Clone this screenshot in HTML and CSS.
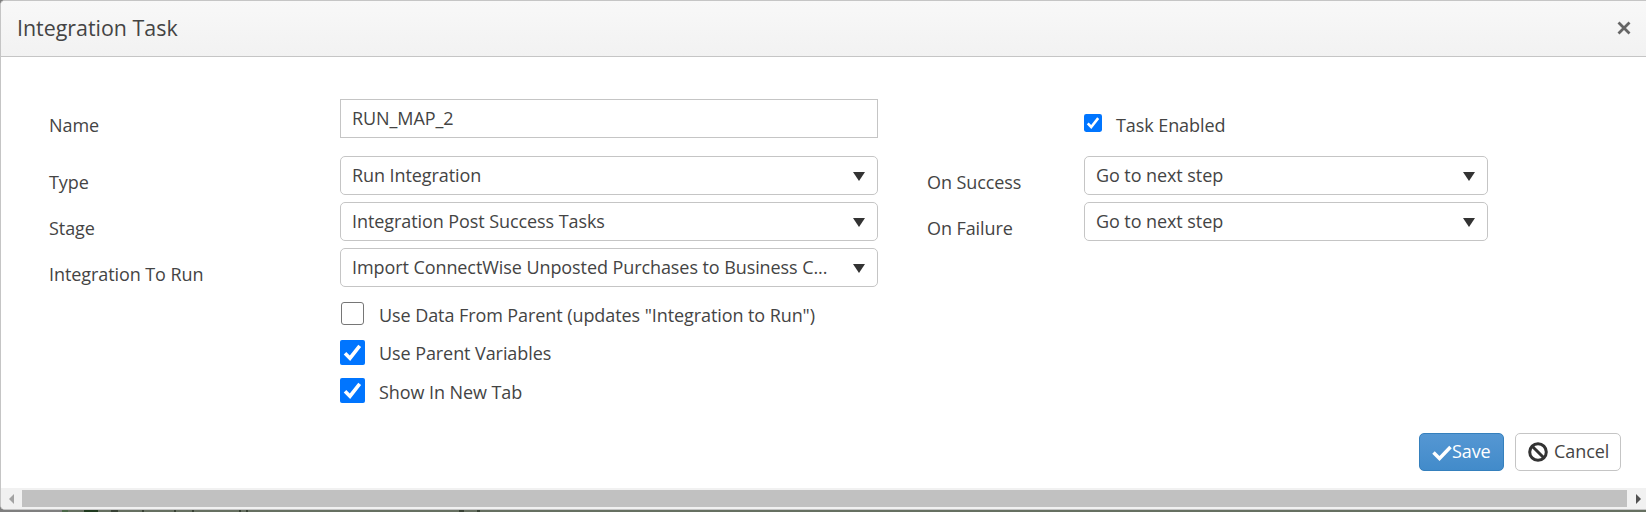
FILE: index.html
```
<!DOCTYPE html>
<html lang="en">
<head>
<meta charset="utf-8">
<title>Integration Task</title>
<link rel="stylesheet" href="styles.css">
</head>
<body>
<div class="dialog">
  <header class="titlebar">
    <h1 class="title">Integration Task</h1>
    <svg class="close" width="14" height="14" viewBox="0 0 14 14"><path d="M1.5 1.5l11 11M12.5 1.5l-11 11"/></svg>
  </header>
  <main class="body">
    <div class="form">
      <div class="row row-first">
        <label class="label">Name</label>
        <div class="field input"><span class="text">RUN_MAP_2</span></div>
        <span class="label-right"></span>
        <div class="enabled"><svg class="check small" viewBox="0 0 25 25"><rect width="25" height="25" rx="3"/><path d="M5.2 13l4.8 5L19.7 5.8"/></svg><span class="text">Task Enabled</span></div>
      </div>
      <div class="row">
        <label class="label">Type</label>
        <div class="field select"><span class="text">Run Integration</span><i class="arrow"></i></div>
        <label class="label-right">On Success</label>
        <div class="field select narrow"><span class="text">Go to next step</span><i class="arrow"></i></div>
      </div>
      <div class="row">
        <label class="label">Stage</label>
        <div class="field select"><span class="text">Integration Post Success Tasks</span><i class="arrow"></i></div>
        <label class="label-right">On Failure</label>
        <div class="field select narrow"><span class="text">Go to next step</span><i class="arrow"></i></div>
      </div>
      <div class="row">
        <label class="label">Integration To Run</label>
        <div class="field select"><span class="text">Import ConnectWise Unposted Purchases to Business C...</span><i class="arrow"></i></div>
      </div>
    </div>
    <div class="options">
      <div class="option"><span class="box"></span><span class="text">Use Data From Parent (updates "Integration to Run")</span></div>
      <div class="option"><svg class="check" viewBox="0 0 25 25"><rect width="25" height="25" rx="2"/><path d="M5 13.2l5 5L19.7 5.8"/></svg><span class="text">Use Parent Variables</span></div>
      <div class="option last"><svg class="check" viewBox="0 0 25 25"><rect width="25" height="25" rx="2"/><path d="M5 13.2l5 5L19.7 5.8"/></svg><span class="text">Show In New Tab</span></div>
    </div>
    <div class="actions">
      <div class="button save"><svg width="20" height="16" viewBox="0 0 20 16"><path d="M1.5 7.5l6 6L18.5 2"/></svg><span>Save</span></div>
      <div class="button cancel"><svg width="20" height="20" viewBox="0 0 20 20"><circle cx="10" cy="10" r="8.3"/><path d="M4.2 4.2l11.6 11.6"/></svg><span>Cancel</span></div>
    </div>
  </main>
  <div class="scrollbar">
    <i class="scroll-left"></i><div class="thumb"></div><i class="scroll-right"></i>
  </div>
</div>
<div class="backdrop"></div>
</body>
</html>
```
FILE: styles.css
```
* { box-sizing: border-box; }
body { margin: 0; width: 1646px; height: 512px; overflow: hidden; background: #7f7f7f; font-family: "Open Sans", sans-serif; font-size: 18px; font-weight: 400; letter-spacing: -0.08px; line-height: 24px; color: #444; }
.dialog { display: flex; flex-direction: column; height: 510px; border: 1px solid #c5c5c5; border-right: 0; border-radius: 5px 0 0 5px; background: #fff; overflow: hidden; }
.titlebar { display: flex; flex: none; align-items: center; justify-content: space-between; height: 56px; padding: 0 15px 1px 16px; border-bottom: 1px solid #c5c5c5; background: linear-gradient(#f8f8f8, #f2f2f2); }
.title { margin: 0; font-size: 21.4px; font-weight: 400; letter-spacing: 0; line-height: 28px; }
.close { fill: none; stroke: #666; stroke-width: 2.8; }
.body { flex: 1; display: flex; flex-direction: column; padding: 42px 25px 0 48px; }
.row { display: flex; height: 39px; margin-bottom: 7px; }
.row-first { margin-bottom: 18px; }
.label { width: 291px; padding-top: 14px; }
.label-right { width: 157px; padding-top: 14px; }
.text { white-space: nowrap; }
.field { display: flex; align-items: center; justify-content: space-between; width: 538px; height: 39px; margin-right: 49px; padding: 0 12px 2px 11px; border: 1px solid #c5c5c5; background: #fff; }
.select { border-radius: 5px; }
.narrow { width: 404px; margin: 0; }
.arrow { margin-top: 3px; border: 6px solid transparent; border-top: 9px solid #333; border-bottom: 0; }
.enabled { display: flex; padding-top: 15px; gap: 14px; }
.enabled .text { margin-top: -1px; }
.check { flex: none; width: 25px; height: 25px; }
.check rect { fill: #0075ff; }
.check path { fill: none; stroke: #fff; stroke-width: 3.6; }
.small { width: 18px; height: 18px; }
.options { padding: 8px 0 0 291px; }
.option { display: flex; align-items: flex-start; height: 38px; gap: 14px; }
.option .text { padding-top: 1px; }
.option.last .text { padding-top: 2px; }
.box { width: 23px; height: 23px; margin: 0 1px; border: 1px solid #767676; border-radius: 3px; }
.actions { display: flex; justify-content: flex-end; gap: 11px; margin-top: 17px; }
.button { display: flex; align-items: center; height: 38px; padding: 0 12px 2px; border: 1px solid #c5c5c5; border-radius: 5px; }
.button svg { flex: none; fill: none; }
.save { width: 85px; color: #fff; background: linear-gradient(#5597d3, #428bca); border-color: #3580bd; }
.save svg { stroke: #fff; stroke-width: 3.5; margin-top: 3px; }
.cancel { width: 106px; gap: 6px; }
.cancel svg { stroke: #333; stroke-width: 3; margin-top: 2px; }
.scrollbar { display: flex; flex: none; align-items: center; height: 21px; padding: 0 5px 0 8px; background: #f1f1f1; }
.thumb { flex: 1; height: 17px; margin: 0 9px 0 8px; background: #c1c1c1; }
.scroll-left { border: 5px solid transparent; border-left: 0; border-right-color: #a3a3a3; }
.scroll-right { border: 5px solid transparent; border-right: 0; border-left-color: #505050; }
.backdrop { height: 2px; background: linear-gradient(90deg, #7f7f7f 62px, #4b6848 62px 68px, #667061 68px 84px, #1f3a1f 84px 98px, #667061 98px 111px, #384235 111px 118px, #667061 118px 142px, #384235 142px 144px, #667061 144px 174px, #384235 174px 176px, #667061 176px 192px, #384235 192px 194px, #667061 194px 239px, #384235 239px 241px, #667061 241px 246px, #384235 246px 248px, #667061 248px 459px, #384235 459px 464px, #667061 464px 477px, #384235 477px 480px, #667061 480px); }
```
